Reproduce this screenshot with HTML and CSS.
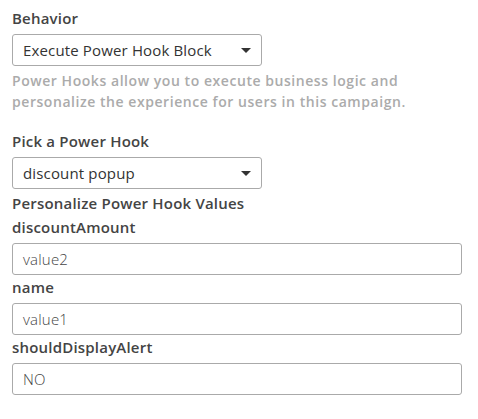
FILE: index.html
```html
<!DOCTYPE html>
<html>
<head>
<meta charset="utf-8">
<link rel="stylesheet" href="styles.css">
</head>
<body>
<div class="form">
  <div class="label first">Behavior</div>
  <div class="select"><span>Execute Power Hook Block</span><span class="caret"></span></div>
  <p class="help">Power Hooks allow you to execute business logic and personalize the experience for users in this campaign.</p>

  <div class="label pick">Pick a Power Hook</div>
  <div class="select"><span>discount popup</span><span class="caret"></span></div>

  <div class="label section">Personalize Power Hook Values</div>

  <div class="label">discountAmount</div>
  <div class="input">value2</div>

  <div class="label">name</div>
  <div class="input">value1</div>

  <div class="label">shouldDisplayAlert</div>
  <div class="input">NO</div>
</div>
</body>
</html>
```
FILE: styles.css
```css
* { box-sizing: border-box; }
body {
  margin: 0;
  background: #fff;
  font-family: "Open Sans", "Liberation Sans", sans-serif;
}
.form {
  padding: 8px 12px 0 12px;
  display: flex;
  flex-direction: column;
  align-items: flex-start;
}
.label {
  font-size: 15px;
  font-weight: 600;
  letter-spacing: 0.2px;
  color: #444;
  line-height: 20px;
  margin-top: 2px;
  margin-bottom: 6px;
}
.label.first { margin-top: 0; margin-bottom: 6px; }
.label.pick { margin-top: 19px; }
.label.section { margin-bottom: 2px; margin-top: 4px; }
.select {
  width: 250px;
  height: 32px;
  border: 1px solid #aaa;
  border-radius: 3px;
  display: flex;
  align-items: center;
  justify-content: space-between;
  padding: 0 10px 0 10px;
  font-size: 15px;
  letter-spacing: 0.15px;
  color: #333;
}
.caret {
  width: 0;
  height: 0;
  border-left: 5px solid transparent;
  border-right: 5px solid transparent;
  border-top: 5px solid #333;
}
.help {
  margin: 4px 0 0 0;
  font-size: 14px;
  font-weight: 600;
  letter-spacing: 0.55px;
  line-height: 21px;
  color: #ababab;
  width: 420px;
}
.input {
  width: 450px;
  height: 32px;
  border: 1px solid #aaa;
  border-radius: 3px;
  display: flex;
  align-items: center;
  padding: 0 10px;
  font-size: 15px;
  font-weight: 300;
  letter-spacing: 0.2px;
  color: #444;
}
```
